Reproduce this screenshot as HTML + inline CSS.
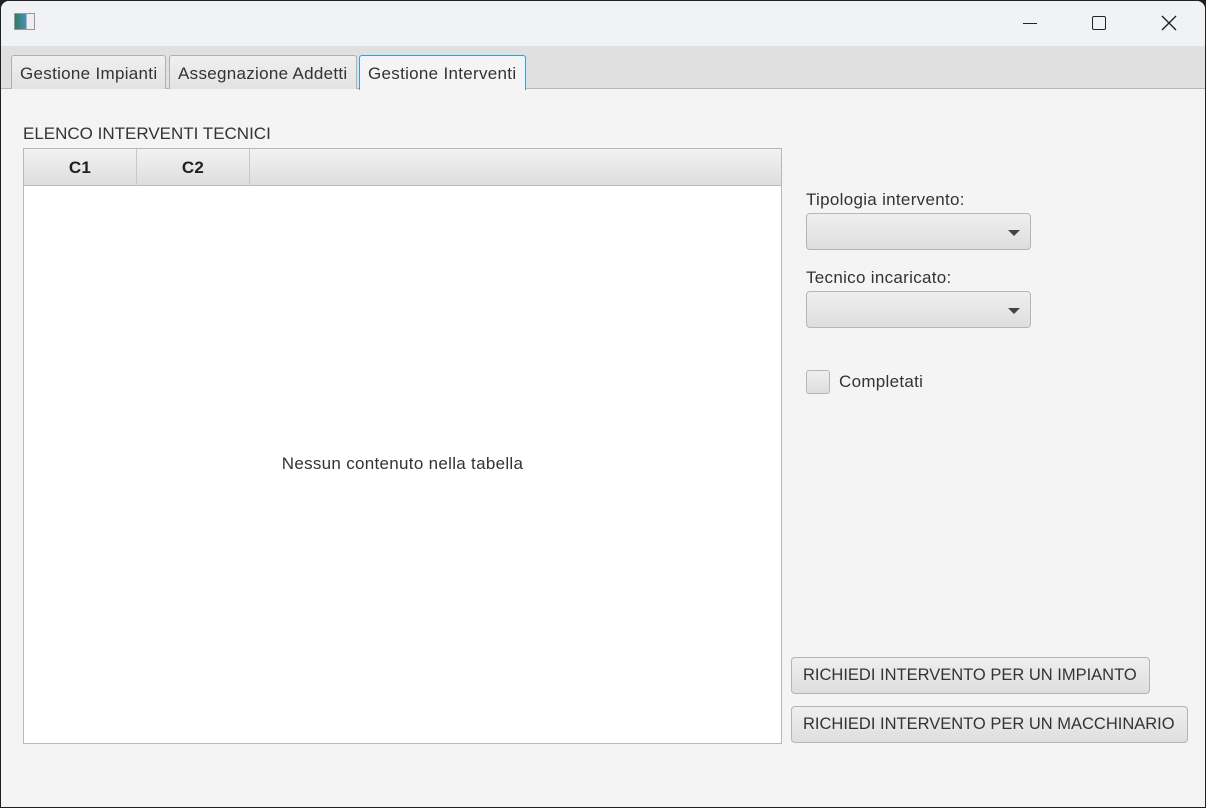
<!DOCTYPE html>
<html><head><meta charset="utf-8"><style>
*{box-sizing:border-box;margin:0;padding:0}
body{width:1206px;height:808px;background:#202020;font-family:"Liberation Sans",sans-serif;font-size:17px;letter-spacing:0.3px;color:#222;position:relative;overflow:hidden}
.win{position:absolute;left:1px;top:1px;width:1204px;height:806px;background:#f4f4f4;border-radius:8px 8px 0 0;overflow:hidden}
.title{position:absolute;left:0;top:0;width:100%;height:45px;background:#f1f2f5}
.tabbar{position:absolute;left:0;top:45px;width:100%;height:43px;background:#e0e0e0;border-bottom:1px solid #b8b8b8}
.tab{position:absolute;top:9px;height:34px;border:1px solid #b0b0b0;border-bottom:none;border-radius:3px 3px 0 0;background:linear-gradient(#f0f0f0,#e2e2e2);padding:8px 0 0 8px;color:#333;white-space:nowrap}
.abs{position:absolute}
.combo{position:absolute;width:225px;height:37px;border:1px solid #b5b5b5;border-radius:4px;background:linear-gradient(#efefef,#dedede)}
.combo:after{content:"";position:absolute;right:10px;top:16px;border-left:6px solid transparent;border-right:6px solid transparent;border-top:6px solid #444}
.btn{position:absolute;height:37px;border:1px solid #b5b5b5;border-radius:4px;background:linear-gradient(#efefef,#dedede);font-size:16.5px;letter-spacing:0;padding:8px 11px 0;color:#333;white-space:nowrap}
</style></head><body><div class="win">
<div class="title">
<div class="abs" style="left:13px;top:12px;width:21px;height:17px;border:1px solid #999;background:linear-gradient(90deg,#2e7d5a 0,#4a90c0 60%,#eee 60%)"></div>
<div class="abs" style="left:1022px;top:22px;width:14px;height:1px;background:#222"></div>
<div class="abs" style="left:1091px;top:15px;width:14px;height:14px;border:1.5px solid #222;border-radius:2px"></div>
<svg class="abs" style="left:1160px;top:14px" width="16" height="16"><path d="M1 1L15 15M15 1L1 15" stroke="#222" stroke-width="1.4"/></svg>
</div>
<div class="tabbar">
<div class="tab" style="left:10px;width:155px">Gestione Impianti</div>
<div class="tab" style="left:168px;width:188px">Assegnazione Addetti</div>
<div class="tab" style="left:358px;width:167px;background:#f4f4f4;border-color:#2ea3d3;height:35px">Gestione Interventi</div>
</div>
<div class="abs" style="left:22px;top:123px;color:#333;letter-spacing:0">ELENCO INTERVENTI TECNICI</div>
<div class="abs" style="left:22px;top:147px;width:759px;height:596px;border:1px solid #b8b8b8;background:#fff">
<div class="abs" style="left:0;top:0;width:757px;height:37px;background:linear-gradient(#f2f2f2,#dedede);border-bottom:1px solid #bbb"></div>
<div class="abs" style="left:0;top:0;width:113px;height:37px;border-right:1px solid #c8c8c8;text-align:center;font-weight:bold;padding-top:9px">C1</div>
<div class="abs" style="left:113px;top:0;width:113px;height:37px;border-right:1px solid #c8c8c8;text-align:center;font-weight:bold;padding-top:9px">C2</div>
<div class="abs" style="left:0;top:305px;width:757px;text-align:center;color:#333">Nessun contenuto nella tabella</div>
</div>
<div class="abs" style="left:805px;top:189px;color:#333">Tipologia intervento:</div>
<div class="combo" style="left:805px;top:212px"></div>
<div class="abs" style="left:805px;top:267px;color:#333">Tecnico incaricato:</div>
<div class="combo" style="left:805px;top:290px"></div>
<div class="abs" style="left:805px;top:369px;width:24px;height:24px;border:1px solid #b5b5b5;border-radius:3px;background:linear-gradient(#efefef,#dedede)"></div>
<div class="abs" style="left:838px;top:371px;color:#333">Completati</div>
<div class="btn" style="left:790px;top:656px;width:359px">RICHIEDI INTERVENTO PER UN IMPIANTO</div>
<div class="btn" style="left:790px;top:705px;width:397px">RICHIEDI INTERVENTO PER UN MACCHINARIO</div>
</div></body></html>
